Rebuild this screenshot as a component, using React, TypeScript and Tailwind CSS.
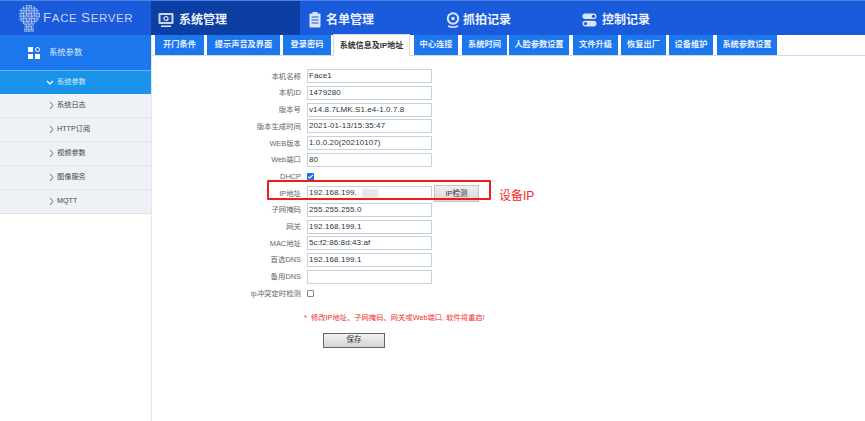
import React from 'react';

const font = "font-['Liberation_Sans','Noto_Sans_CJK_SC',sans-serif]";

const tabs = [
  { t: '开门条件', w: 'w-[49px] ml-[3px]' },
  { t: '提示声音及界面', w: 'w-[73px] ml-[3px]' },
  { t: '登录密码', w: 'w-[48px] ml-[3px]' },
  { t: '系统信息及IP地址', w: 'w-[77px] ml-[2px]', active: true },
  { t: '中心连接', w: 'w-[44px] ml-[4px]' },
  { t: '系统时间', w: 'w-[45px] ml-[4px]' },
  { t: '人脸参数设置', w: 'w-[60px] ml-[2px]' },
  { t: '文件升级', w: 'w-[45px] ml-[4px]' },
  { t: '恢复出厂', w: 'w-[45px] ml-[3px]' },
  { t: '设备维护', w: 'w-[44px] ml-[3px]' },
  { t: '系统参数设置', w: 'w-[60px] ml-[4px]' },
];

const rows: { l: string; v?: string; kind?: string }[] = [
  { l: '本机名称', v: 'Face1' },
  { l: '本机ID', v: '1479280' },
  { l: '版本号', v: 'v14.8.7LMK.S1.e4-1.0.7.8' },
  { l: '版本生成时间', v: '2021-01-13/15:35:47' },
  { l: 'WEB版本', v: '1.0.0.20(20210107)' },
  { l: 'Web端口', v: '80' },
  { l: 'DHCP', kind: 'checked' },
  { l: 'IP地址', v: '192.168.199.', kind: 'ip' },
  { l: '子网掩码', v: '255.255.255.0' },
  { l: '网关', v: '192.168.199.1' },
  { l: 'MAC地址', v: '5c:f2:86:8d:43:af' },
  { l: '首选DNS', v: '192.168.199.1' },
  { l: '备用DNS', v: '' },
  { l: 'ip冲突定时检测', kind: 'unchecked' },
];

const side = ['系统日志', 'HTTP订阅', '视频参数', '图像服务', 'MQTT'];

function Head() {
  const dots: React.ReactNode[] = [];
  for (let y = 1; y < 28; y += 1.6) {
    for (let x = 1; x < 23; x += 1.6) {
      const inside = (x - 11.5) ** 2 / 110 + (y - 10.5) ** 2 / 100 < 1 || (y >= 19 && x > 6 && x < 17 - (y - 19) * 0.1);
      if (inside) {
        const n = Math.round(x * 5 + y * 7) % 5;
        dots.push(<rect key={x + '-' + y} x={x} y={y} width="1.2" height="1.1" fill={n === 0 ? '#7f9fe0' : n === 1 ? '#b6c8ee' : '#dfe8f8'} />);
      }
    }
  }
  return <svg width="23" height="28" viewBox="0 0 23 28">{dots}</svg>;
}

function NavIcon({ kind }: { kind: string }) {
  if (kind === 'monitor')
    return (
      <svg width="16" height="16" viewBox="0 0 16 16">
        <rect x="0.5" y="1" width="15" height="11" rx="1" fill="#c9d6ee" />
        <rect x="2.5" y="3" width="11" height="7" fill="#1c46a6" />
        <circle cx="8" cy="6.5" r="2" fill="none" stroke="#dfe8f8" strokeWidth="1.2" />
        <rect x="3" y="13.5" width="10" height="1.5" fill="#dfe8f8" />
      </svg>
    );
  if (kind === 'list')
    return (
      <svg width="12" height="16" viewBox="0 0 12 16">
        <rect x="0.5" y="1.5" width="11" height="14" rx="1" fill="#dbe5f7" />
        <rect x="3.5" y="0" width="5" height="3" fill="#dbe5f7" />
        <path d="M2.5 5h7M2.5 8h7M2.5 11h7" stroke="#1a5bdc" strokeWidth="1" />
      </svg>
    );
  if (kind === 'camera')
    return (
      <svg width="14" height="16" viewBox="0 0 14 16">
        <circle cx="7" cy="6.5" r="5.2" fill="none" stroke="#dbe5f7" strokeWidth="2" />
        <circle cx="7" cy="6.5" r="1.8" fill="#dbe5f7" />
        <path d="M2 14c3 1.5 7 1.5 10 0" fill="none" stroke="#dbe5f7" strokeWidth="1.6" />
      </svg>
    );
  return (
    <svg width="15" height="14" viewBox="0 0 15 14">
      <rect x="0.5" y="0.5" width="14" height="5.6" rx="2.8" fill="#dbe5f7" />
      <circle cx="11.5" cy="3.3" r="1.6" fill="#1a5bdc" />
      <rect x="0.5" y="7.8" width="14" height="5.6" rx="2.8" fill="#dbe5f7" />
      <circle cx="3.5" cy="10.6" r="1.6" fill="#1a5bdc" />
    </svg>
  );
}

function Chevron({ down }: { down?: boolean }) {
  return down ? (
    <svg width="8" height="6" viewBox="0 0 8 6"><path d="M1 1l3 3 3-3" fill="none" stroke="#fff" strokeWidth="1.2" /></svg>
  ) : (
    <svg width="5" height="9" viewBox="0 0 5 9"><path d="M1 1l3 3.5-3 3.5" fill="none" stroke="#555" strokeWidth="0.9" /></svg>
  );
}

function Nav({ icon, label, w, gap, active }: { icon: string; label: string; w: string; gap: string; active?: boolean }) {
  return (
    <div className={`h-full pt-[3px] flex items-center ${w} ${active ? 'bg-[#0b3fa3] pl-[7px]' : ''}`}>
      <NavIcon kind={icon} />
      <span className={`${gap} text-[12px] font-bold text-[#eef3fb]`}>{label}</span>
    </div>
  );
}

export default function App() {
  return (
    <div className={`relative w-[865px] h-[421px] bg-white overflow-hidden ${font}`}>
      <header className="h-[35px] bg-[#1a5bdc] border-t border-[#4f80e4] flex">
        <div className="w-[151px] flex items-center pl-[17px]">
          <Head />
          <span className="ml-[3px] font-['Liberation_Sans',sans-serif] text-[#c8d4ea] text-[11.5px] tracking-[0.6px] whitespace-nowrap">
            <span className="text-[13.5px]">F</span>ACE <span className="text-[13.5px]">S</span>ERVER
          </span>
        </div>
        <Nav icon="monitor" label="系统管理" w="w-[149px]" gap="ml-[5px]" active />
        <div className="pl-[9px] w-[146px] h-full"><Nav icon="list" label="名单管理" w="w-full" gap="ml-[5px]" /></div>
        <div className="w-[136px] h-full"><Nav icon="camera" label="抓拍记录" w="w-full" gap="ml-[3px]" /></div>
        <div className="h-full"><Nav icon="toggle" label="控制记录" w="w-[120px]" gap="ml-[5px]" /></div>
      </header>
      <div className="flex h-[386px]">
        <aside className="w-[152px] shrink-0 border-r border-[#e3e6ea] flex flex-col">
          <div className="h-[35px] shrink-0 bg-[#1c76ec] flex items-center pl-[28px] text-white">
            <svg width="12" height="12" viewBox="0 0 12 12" fill="#fff">
              <rect x="0" y="0" width="5" height="5" />
              <rect x="0" y="7" width="5" height="5" />
              <rect x="7" y="7" width="5" height="5" />
              <circle cx="9.5" cy="2.5" r="2" fill="none" stroke="#fff" strokeWidth="1" />
            </svg>
            <span className="ml-[9px] text-[8.3px] text-[#dce9fb]">系统参数</span>
          </div>
          <div className="h-[24px] shrink-0 bg-[#1a94ea] border-t border-[#6db8f0] flex items-center pl-[46px] text-[7.2px] text-[#d8ecfb]">
            <Chevron down />
            <span className="ml-[3px]">系统参数</span>
          </div>
          {side.map((s) => (
            <div key={s} className="h-[24px] shrink-0 bg-[#eef2f6] border-b border-[#e0e3e8] flex items-center pl-[49px] text-[7.2px] text-[#444]">
              <Chevron />
              <span className="ml-[3px]">{s}</span>
            </div>
          ))}
        </aside>
        <main className="flex-1 min-w-0 flex flex-col">
          <div className="h-[21px] border-b border-[#d9d9d9] flex items-end">
            {tabs.map((t) =>
              t.active ? (
                <div key={t.t} className={`${t.w} h-[22px] -mb-px bg-white border-x border-t border-[#d9d9d9] flex items-center justify-center text-[8px] font-bold text-[#333] whitespace-nowrap`}>{t.t}</div>
              ) : (
                <div key={t.t} className={`${t.w} h-[20px] bg-[#1c76ec] flex items-center justify-center text-[8.2px] font-bold text-[#e8f1fd] whitespace-nowrap`}>{t.t}</div>
              )
            )}
          </div>
          <form className="pt-[12px] flex flex-col">
            {rows.map((r) => (
              <div key={r.l} className="h-[16.7px] flex items-center">
                <label className="w-[149px] text-right text-[7.4px] text-[#666] whitespace-nowrap">{r.l}</label>
                <div className="ml-[6px] flex items-center">
                  {r.kind === 'checked' && (
                    <span className="w-[7px] h-[7px] rounded-[1px] bg-[#1a6fe0] flex items-center justify-center">
                      <svg width="7" height="7" viewBox="0 0 7 7"><path d="M1.2 3.6l1.6 1.6 3-3.4" fill="none" stroke="#fff" strokeWidth="1.1" /></svg>
                    </span>
                  )}
                  {r.kind === 'unchecked' && <span className="w-[7px] h-[7px] border border-[#888] rounded-[1px] bg-white" />}
                  {(r.kind === undefined || r.kind === 'ip') && (
                    <div className="w-[125px] h-[14px] border border-[#c4d2e0] bg-white pl-px flex items-center text-[8px] tracking-[0.1px] text-[#333] whitespace-nowrap">
                      {r.v}
                      {r.kind === 'ip' && <span className="ml-[5px] w-[16px] h-[9px] bg-[#e6e6e6] blur-[1px]" />}
                    </div>
                  )}
                  {r.kind === 'ip' && (
                    <button type="button" className="ml-[2px] w-[45px] h-[17px] bg-linear-to-b from-[#f0f0f0] to-[#d8d8d8] border border-[#c4c4c4] text-[7.5px] text-[#333] flex items-center justify-center">IP检测</button>
                  )}
                </div>
              </div>
            ))}
            <p className="mt-[11px] pl-[152px] text-[7.3px] text-[#f03030] whitespace-nowrap">*&nbsp; 修改IP地址、子网掩码、网关或Web端口, 软件将重启!</p>
            <button type="button" className="ml-[171px] mt-[9px] w-[62px] h-[15px] border border-[#666] bg-linear-to-b from-[#f2f2f2] to-[#d4d4d4] text-[7.5px] text-[#333] flex items-center justify-center">保存</button>
          </form>
        </main>
      </div>
      <div className="absolute left-[267px] top-[180px] w-[224px] h-[20px] border-2 border-[#ee1c1c] rounded-[1px]" />
      <span className="absolute left-[499px] top-[188px] text-[12px] leading-[16px] text-[#f02a2a]">设备IP</span>
    </div>
  );
}
